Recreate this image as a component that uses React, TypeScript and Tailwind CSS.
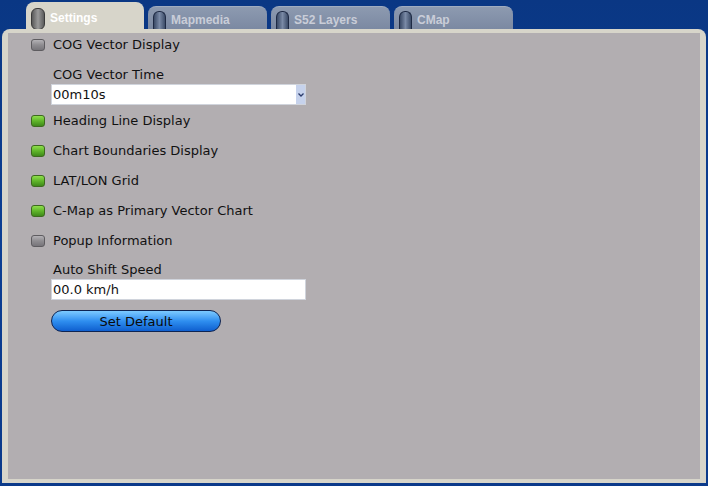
import React from 'react';

const tabs = ['Settings', 'Mapmedia', 'S52 Layers', 'CMap'];

function Toggle({ on }: { on: boolean }) {
    return (
        <span
            className={
                on
                    ? 'inline-block w-[14px] h-[12px] rounded-[3px] border border-[#3d6a1e] bg-gradient-to-b from-[#8fe04c] via-[#5fb52a] to-[#3f8a1a]'
                    : 'inline-block w-[14px] h-[12px] rounded-[3px] border border-[#5e5c60] bg-gradient-to-b from-[#b4b2b6] via-[#8e8c90] to-[#77757a]'
            }
        />
    );
}

function CheckRow({ label, on, h = 'h-[30px]' }: { label: string; on: boolean; h?: string }) {
    return (
        <div className={'flex items-center ' + h}>
            <div className="w-[22px] flex">
                <Toggle on={on} />
            </div>
            <span>{label}</span>
        </div>
    );
}

function Pill({ active }: { active: boolean }) {
    return (
        <span
            className={
                active
                    ? 'w-[14px] h-[22px] rounded-[6px] border border-[#3a3a3a] bg-gradient-to-r from-[#5a5a5a] via-[#9a9a9a] to-[#5c5c5c]'
                    : 'w-[13px] h-[18px] rounded-t-[6px] border border-b-0 border-[#1e2a44] bg-gradient-to-r from-[#3a4a66] via-[#7a8aa6] to-[#3c4c68]'
            }
        />
    );
}

export default function App() {
    return (
        <div
            className="w-[708px] h-[486px] bg-gradient-to-b from-[#0a3784] via-[#0c3f93] to-[#0b3a8a] flex flex-col overflow-hidden"
            style={{ fontFamily: '"DejaVu Sans", sans-serif' }}
        >
            <div className="flex items-end h-[29px] pl-[26px] gap-[4px]">
                {tabs.map((t, i) =>
                    i === 0 ? (
                        <div
                            key={t}
                            className="w-[118px] h-[27px] rounded-t-[8px] bg-[#d7d5ca] flex items-start pt-[6px] pl-[5px] gap-[5px]"
                        >
                            <Pill active />
                            <span
                                className="text-white font-bold text-[12px] leading-none mt-[4px]"
                                style={{ fontFamily: '"Liberation Sans", sans-serif' }}
                            >
                                {t}
                            </span>
                        </div>
                    ) : (
                        <div
                            key={t}
                            className="w-[119px] h-[23px] rounded-t-[8px] bg-gradient-to-b from-[#8d9ab0] to-[#7b89a2] flex items-end pl-[5px] gap-[5px] border-t border-[#a0acc0]"
                        >
                            <Pill active={false} />
                            <span
                                className="text-[#c9cdd8] font-bold text-[12px] leading-none mb-[3px]"
                                style={{ fontFamily: '"Liberation Sans", sans-serif' }}
                            >
                                {t}
                            </span>
                        </div>
                    )
                )}
            </div>
            <div className="mx-[2px] h-[454px] rounded-t-[8px] bg-[#d7d5ca] pt-[4px] px-[6px] pb-[4px]">
                <div className="h-full bg-[#b2aeb1] text-[13px] text-[#111] pl-[23px]">
                    <CheckRow label="COG Vector Display" on={false} h="h-[24px]" />
                    <div className="pl-[20px] flex flex-col">
                        <div className="h-[27px] flex items-end leading-[15px] pb-[2px] pl-[2px]">COG Vector Time</div>
                        <div className="w-[255px] h-[21px] bg-white flex items-center border border-[#d0d4dc]">
                            <span className="flex-1 pl-[1px]">00m10s</span>
                            <span className="w-[9px] h-full bg-[#c6d2ec] flex items-center justify-center">
                                <svg width="6" height="4" viewBox="0 0 6 4">
                                    <path d="M0.5 0.5 L3 3 L5.5 0.5" stroke="#2a3a6a" strokeWidth="1.3" fill="none" />
                                </svg>
                            </span>
                        </div>
                    </div>
                    <div className="mt-[1px]">
                        <CheckRow label="Heading Line Display" on />
                        <CheckRow label="Chart Boundaries Display" on />
                        <CheckRow label="LAT/LON Grid" on />
                        <CheckRow label="C-Map as Primary Vector Chart" on />
                        <CheckRow label="Popup Information" on={false} />
                    </div>
                    <div className="pl-[20px] flex flex-col items-start">
                        <div className="h-[23px] flex items-end leading-[15px] pb-[2px] pl-[2px]">Auto Shift Speed</div>
                        <div className="w-[255px] h-[21px] bg-white flex items-center border border-[#d0d4dc] pl-[1px]">
                            00.0 km/h
                        </div>
                        <button className="mt-[10px] w-[170px] h-[22px] rounded-full border-[1.5px] border-[#0e2452] bg-gradient-to-b from-[#7ccaff] via-[#2f8ff0] to-[#0f5fcf] text-[13px] text-[#0a0a0a] leading-none">
                            Set Default
                        </button>
                    </div>
                </div>
            </div>
        </div>
    );
}
